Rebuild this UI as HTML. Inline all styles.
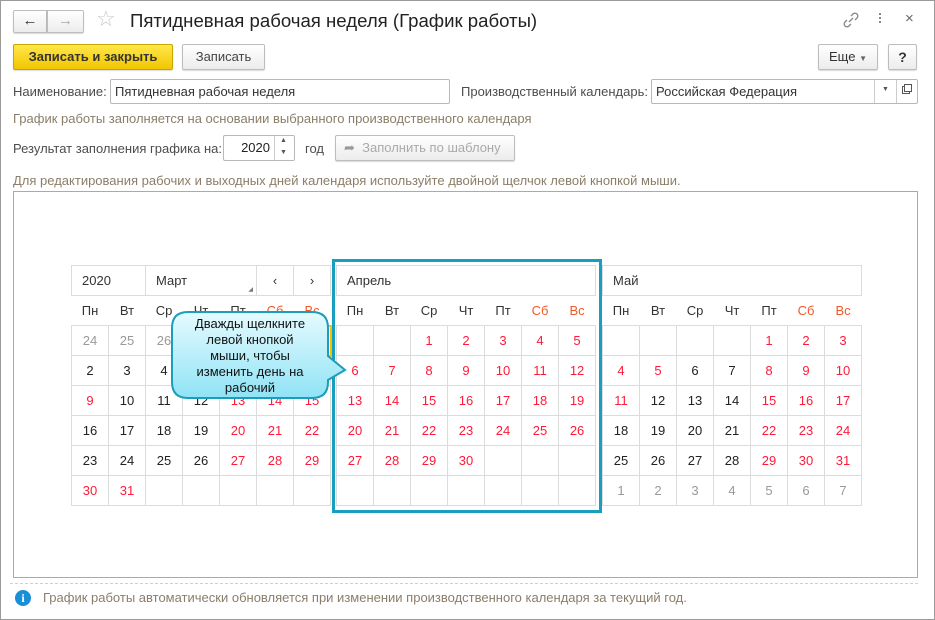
<!DOCTYPE html>
<html><head><meta charset="utf-8"><style>
*{box-sizing:border-box;margin:0;padding:0}
body{width:935px;height:620px;position:relative;background:#fff;font-family:"Liberation Sans",Arial,sans-serif;font-size:13px;color:#333;overflow:hidden}
.a{position:absolute}
.frame{left:0;top:0;width:935px;height:620px;border:1px solid #9a9a9a}
.btn{position:absolute;border:1px solid #bdbdbd;border-radius:2px;background:linear-gradient(#fff,#ececec);text-align:center;color:#444;box-shadow:0 1px 1px rgba(0,0,0,.15)}
.inp{position:absolute;border:1px solid #b8b8b8;border-radius:2px;background:#fff;color:#333;padding-left:4px}
.lbl{position:absolute;color:#4d4d4d}
.hint{position:absolute;color:#8b7d69}
table{position:absolute;border-collapse:collapse;table-layout:fixed}
col{width:37px}
td{height:30px;border:1px solid #dcdcdc;text-align:center;font-size:13px;color:#222;padding:0}
tr.wd td{border-left:none;border-right:none;color:#333}
tr.wd td.we{color:#f05a28}
tr.hd td{text-align:left;padding-left:10px;color:#333}
.r{color:#ff1a3a !important}
.g{color:#999 !important}
</style></head><body>
<div class="a frame"></div>

<div class="btn" style="left:13px;top:10px;width:34px;height:23px;border-radius:2px 0 0 2px;font-size:15px;line-height:20px;color:#333">&#8592;</div>
<div class="btn" style="left:47px;top:10px;width:37px;height:23px;border-radius:0 2px 2px 0;font-size:15px;line-height:20px;color:#aaa">&#8594;</div>
<div class="a" style="left:96px;top:6px;font-size:22px;color:#c8c8c8">&#9734;</div>
<div class="a" style="left:130px;top:10px;font-size:18.6px;color:#222">Пятидневная рабочая неделя (График работы)</div>

<svg class="a" style="left:842px;top:11px" width="18" height="18" viewBox="0 0 18 18"><g fill="none" stroke="#888" stroke-width="1.3"><path d="M7 11 L11 7"/><path d="M9 5 l2-2 a2.8 2.8 0 0 1 4 4 l-2 2"/><path d="M9 13 l-2 2 a2.8 2.8 0 0 1 -4 -4 l2 -2"/></g></svg>
<div class="a" style="left:879px;top:13px;width:2px;height:2px;background:#888;box-shadow:0 4px 0 #888,0 8px 0 #888"></div>
<div class="a" style="left:905px;top:10px;font-size:15px;color:#666">×</div>

<div class="btn" style="left:13px;top:44px;width:160px;height:26px;background:linear-gradient(#ffe74a,#f2c600);border-color:#c9a500;font-weight:bold;color:#333;line-height:24px">Записать и закрыть</div>
<div class="btn" style="left:182px;top:44px;width:83px;height:26px;line-height:24px">Записать</div>
<div class="btn" style="left:818px;top:44px;width:60px;height:26px;line-height:24px;color:#333">Еще <span style="font-size:8px;color:#666">▼</span></div>
<div class="btn" style="left:888px;top:44px;width:29px;height:26px;line-height:24px;color:#333;font-weight:bold;font-size:14px">?</div>

<div class="lbl" style="left:13px;top:84px">Наименование:</div>
<div class="inp" style="left:110px;top:79px;width:340px;height:25px;line-height:23px">Пятидневная рабочая неделя</div>
<div class="lbl" style="left:461px;top:84px">Производственный календарь:</div>
<div class="inp" style="left:651px;top:79px;width:267px;height:25px;line-height:23px">Российская Федерация</div>
<div class="a" style="left:874px;top:80px;width:1px;height:23px;background:#ccc"></div>
<div class="a" style="left:896px;top:80px;width:1px;height:23px;background:#ccc"></div>
<div class="a" style="left:882px;top:86px;font-size:7px;color:#555">▼</div>
<div class="a" style="left:902px;top:86px;width:8px;height:8px;border:1px solid #555"></div>
<div class="a" style="left:904px;top:84px;width:8px;height:8px;border:1px solid #555;background:#fff"></div>

<div class="hint" style="left:13px;top:111px">График работы заполняется на основании выбранного производственного календаря</div>

<div class="lbl" style="left:13px;top:141px">Результат заполнения графика на:</div>
<div class="inp" style="left:223px;top:135px;width:72px;height:26px;line-height:24px;text-align:right;padding-right:24px;color:#222">2020</div>
<div class="a" style="left:274px;top:136px;width:1px;height:24px;background:#ccc"></div>
<div class="a" style="left:280px;top:137px;font-size:7px;color:#555">▲</div>
<div class="a" style="left:280px;top:149px;font-size:7px;color:#555">▼</div>
<div class="lbl" style="left:305px;top:141px">год</div>
<div class="btn" style="left:335px;top:135px;width:180px;height:26px;line-height:24px;color:#aaa;text-align:left;padding-left:8px"><span style="color:#999">&#10150;</span>&nbsp; Заполнить по шаблону</div>

<div class="hint" style="left:13px;top:173px">Для редактирования рабочих и выходных дней календаря используйте двойной щелчок левой кнопкой мыши.</div>

<div class="a" style="left:13px;top:191px;width:905px;height:387px;border:1px solid #aaa"></div>

<table style="left:71px;top:265px;width:259px">
<colgroup><col><col><col><col><col><col><col></colgroup>
<tr class="hd"><td colspan="2">2020</td><td colspan="3" style="position:relative">Март<span style="position:absolute;right:3px;bottom:2px;font-size:6px;color:#777">◢</span></td><td style="text-align:center;padding:0">‹</td><td style="text-align:center;padding:0">›</td></tr>
<tr class="wd"><td>Пн</td><td>Вт</td><td>Ср</td><td>Чт</td><td>Пт</td><td class="we">Сб</td><td class="we">Вс</td></tr>
<tr><td class="g">24</td><td class="g">25</td><td class="g">26</td><td class="g">27</td><td class="g">28</td><td class="g">29</td><td class="r" style="border:2px solid #f5c400">1</td></tr>
<tr><td>2</td><td>3</td><td>4</td><td>5</td><td class="r">6</td><td class="r">7</td><td class="r">8</td></tr>
<tr><td class="r">9</td><td>10</td><td>11</td><td>12</td><td class="r">13</td><td class="r">14</td><td class="r">15</td></tr>
<tr><td>16</td><td>17</td><td>18</td><td>19</td><td class="r">20</td><td class="r">21</td><td class="r">22</td></tr>
<tr><td>23</td><td>24</td><td>25</td><td>26</td><td class="r">27</td><td class="r">28</td><td class="r">29</td></tr>
<tr><td class="r">30</td><td class="r">31</td><td></td><td></td><td></td><td></td><td></td></tr>
</table>

<div class="a" style="left:332px;top:259px;width:270px;height:254px;border:3px solid #169fbf"></div>
<table style="left:336px;top:265px;width:259px">
<colgroup><col><col><col><col><col><col><col></colgroup>
<tr class="hd"><td colspan="7">Апрель</td></tr>
<tr class="wd"><td>Пн</td><td>Вт</td><td>Ср</td><td>Чт</td><td>Пт</td><td class="we">Сб</td><td class="we">Вс</td></tr>
<tr><td></td><td></td><td class="r">1</td><td class="r">2</td><td class="r">3</td><td class="r">4</td><td class="r">5</td></tr>
<tr><td class="r">6</td><td class="r">7</td><td class="r">8</td><td class="r">9</td><td class="r">10</td><td class="r">11</td><td class="r">12</td></tr>
<tr><td class="r">13</td><td class="r">14</td><td class="r">15</td><td class="r">16</td><td class="r">17</td><td class="r">18</td><td class="r">19</td></tr>
<tr><td class="r">20</td><td class="r">21</td><td class="r">22</td><td class="r">23</td><td class="r">24</td><td class="r">25</td><td class="r">26</td></tr>
<tr><td class="r">27</td><td class="r">28</td><td class="r">29</td><td class="r">30</td><td></td><td></td><td></td></tr>
<tr><td></td><td></td><td></td><td></td><td></td><td></td><td></td></tr>
</table>

<table style="left:602px;top:265px;width:259px">
<colgroup><col><col><col><col><col><col><col></colgroup>
<tr class="hd"><td colspan="7">Май</td></tr>
<tr class="wd"><td>Пн</td><td>Вт</td><td>Ср</td><td>Чт</td><td>Пт</td><td class="we">Сб</td><td class="we">Вс</td></tr>
<tr><td></td><td></td><td></td><td></td><td class="r">1</td><td class="r">2</td><td class="r">3</td></tr>
<tr><td class="r">4</td><td class="r">5</td><td>6</td><td>7</td><td class="r">8</td><td class="r">9</td><td class="r">10</td></tr>
<tr><td class="r">11</td><td>12</td><td>13</td><td>14</td><td class="r">15</td><td class="r">16</td><td class="r">17</td></tr>
<tr><td>18</td><td>19</td><td>20</td><td>21</td><td class="r">22</td><td class="r">23</td><td class="r">24</td></tr>
<tr><td>25</td><td>26</td><td>27</td><td>28</td><td class="r">29</td><td class="r">30</td><td class="r">31</td></tr>
<tr><td class="g">1</td><td class="g">2</td><td class="g">3</td><td class="g">4</td><td class="g">5</td><td class="g">6</td><td class="g">7</td></tr>
</table>

<svg class="a" style="left:170px;top:310px" width="180" height="92">
<defs><linearGradient id="cg" x1="0" y1="0" x2="0" y2="1"><stop offset="0" stop-color="#e6fbff"/><stop offset="1" stop-color="#8fe3f5"/></linearGradient></defs>
<path d="M18 2 H142 Q158 2 158 18 V46 L175 60 L158 70 V72 Q158 88 142 88 H18 Q2 88 2 72 V18 Q2 2 18 2 Z" fill="url(#cg)" stroke="#1b9dbd" stroke-width="2"/>
</svg>
<div class="a" style="left:185px;top:316px;width:130px;text-align:center;font-size:13px;line-height:16px;color:#111">Дважды щелкните левой кнопкой мыши, чтобы изменить день на рабочий</div>

<div class="a" style="left:10px;top:583px;width:908px;border-top:1px dashed #d0d0d0"></div>
<div class="a" style="left:15px;top:590px;width:16px;height:16px;border-radius:50%;background:#1a8ed6;color:#fff;font-weight:bold;font-size:12px;text-align:center;line-height:16px;font-family:'Liberation Serif',serif">i</div>
<div class="hint" style="left:43px;top:590px">График работы автоматически обновляется при изменении производственного календаря за текущий год.</div>
</body></html>
